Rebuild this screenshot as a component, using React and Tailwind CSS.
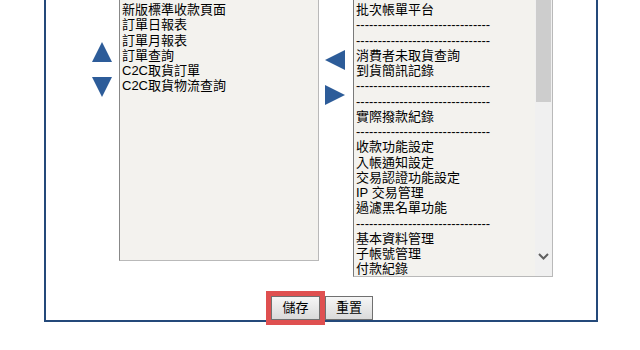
import React from 'react'

const leftItems = ['新版標準收款頁面', '訂單日報表', '訂單月報表', '訂單查詢', 'C2C取貨訂單', 'C2C取貨物流查詢']

const dash = '-------------------------------'

const rightItems = [
  '批次帳單平台',
  dash,
  dash,
  '消費者未取貨查詢',
  '到貨簡訊記錄',
  dash,
  dash,
  '實際撥款紀錄',
  dash,
  '收款功能設定',
  '入帳通知設定',
  '交易認證功能設定',
  'IP 交易管理',
  '過濾黑名單功能',
  dash,
  '基本資料管理',
  '子帳號管理',
  '付款紀錄',
]

function Tri({ dir }) {
  const pts = {
    up: '10,0 20,20 0,20',
    down: '0,0 20,0 10,20',
    left: '0,10 20,0 20,20',
    right: '0,0 20,10 0,20',
  }
  return (
    <svg width="20" height="20" viewBox="0 0 20 20" className="block">
      <polygon points={pts[dir]} fill="#2d5c99" />
    </svg>
  )
}

export default function App() {
  return (
    <div
      className="w-[640px] h-[350px] bg-white text-black text-[13px] leading-[15.25px]"
      style={{ fontFamily: '"Liberation Sans", "Noto Sans CJK TC", sans-serif' }}
    >
      <div className="ml-[44px] w-[554px] h-[322px] border-2 border-t-0 border-[#24497a] flex flex-col">
        {/* lists row */}
        <div className="flex items-start h-[277px] pl-[46px]">
          <div className="w-[20px] pt-[42px] flex flex-col gap-[15px]">
            <Tri dir="up" />
            <Tri dir="down" />
          </div>

          <div className="ml-[7px] w-[200px] h-[261px] bg-[#f3f2ee] border border-t-0 border-[#b9b9b9] border-l-[#888888] pl-[2px] pt-[2px] overflow-hidden">
            {leftItems.map((t) => (
              <div key={t} className="whitespace-nowrap">{t}</div>
            ))}
          </div>

          <div className="ml-[6px] w-[20px] pt-[50px] flex flex-col gap-[15px]">
            <Tri dir="left" />
            <Tri dir="right" />
          </div>

          <div className="ml-[8px] w-[200px] h-[277px] bg-[#f3f2ee] border border-t-0 border-[#b9b9b9] border-l-[#7a7a7a] flex overflow-hidden">
            <div className="flex-1 pl-[2px] pt-[2px] overflow-hidden">
              {rightItems.map((t, i) => (
                <div key={i} className="whitespace-nowrap">{t}</div>
              ))}
            </div>
            <div className="w-[17px] bg-[#f0f0f0] flex flex-col items-center">
              <div className="w-[15px] h-[102px] bg-[#cdcdcd]" />
              <div className="flex-1" />
              <svg width="11" height="7" viewBox="0 0 11 7" className="mb-[16px]">
                <polyline points="1,1 5.5,5.5 10,1" fill="none" stroke="#606060" strokeWidth="2" />
              </svg>
            </div>
          </div>
        </div>

        {/* buttons */}
        <div className="mt-[19px] flex justify-center gap-[5px] pl-[2px]">
          <button className="w-[49px] h-[24px] border border-[#707070] bg-gradient-to-b from-[#f6f6f6] to-[#dadada] text-[13px] outline-[5px] outline-solid outline-[#df5050] text-black">
            儲存
          </button>
          <button className="w-[48px] h-[24px] border border-[#707070] bg-gradient-to-b from-[#f6f6f6] to-[#dadada] text-[13px] text-black">
            重置
          </button>
        </div>
      </div>
    </div>
  )
}
